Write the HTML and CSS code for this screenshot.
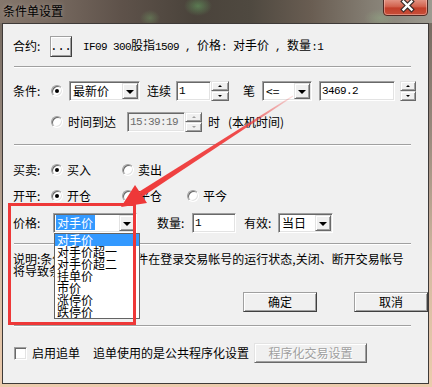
FILE: index.html
```html
<!DOCTYPE html>
<html>
<head>
<meta charset="utf-8">
<title>条件单设置</title>
<link rel="stylesheet" href="styles.css">
</head>
<body>
<div class="window">
  <div class="titlebar">
    <span class="title">条件单设置</span>
    <div class="close">
      <svg width="45" height="16" viewBox="0 0 45 16">
        <defs>
          <linearGradient id="cg" x1="0" y1="0" x2="0" y2="1">
            <stop offset="0" stop-color="#e49a8a"/>
            <stop offset="0.45" stop-color="#d2634f"/>
            <stop offset="0.55" stop-color="#c23f2a"/>
            <stop offset="1" stop-color="#c8503a"/>
          </linearGradient>
        </defs>
        <path d="M0.5,-1 V12 Q0.5,15.5 4,15.5 H41 Q44.5,15.5 44.5,12 V-1 Z" fill="url(#cg)" stroke="#4e2a24"/>
        <path d="M1.5,0 V12 Q1.5,14.5 4,14.5 H41 Q43.5,14.5 43.5,12 V0" fill="none" stroke="rgba(255,210,200,0.45)"/>
        <path d="M20.5,1.5 L28.5,9.5 M28.5,1.5 L20.5,9.5" stroke="#3a2a28" stroke-width="4.6" stroke-linecap="square"/>
        <path d="M20.5,1.5 L28.5,9.5 M28.5,1.5 L20.5,9.5" stroke="#ffffff" stroke-width="2.4" stroke-linecap="square"/>
      </svg>
    </div>
  </div>
  <div class="frame">
    <div class="client">
      <div class="row r1">
        <span class="t w37">合约:</span>
        <span class="pbtn dots">...</span>
        <span class="t info"><span class="m">IF09 300</span>股指<span class="m">1509 , </span>价格<span class="m">: </span>对手价<span class="m"> , </span>数量<span class="m">:1</span></span>
      </div>
      <div class="sep s1"></div>

      <div class="row r2">
        <span class="t w38">条件:</span>
        <span class="radio on"></span>
        <div class="combo c-new"><span class="val">最新价</span><span class="drop"><i class="tri"></i></span></div>
        <span class="t lx">连续</span>
        <div class="edit e-cnt">1</div>
        <div class="spin sp18"><span class="sb"><i class="up"></i></span><span class="sb"><i class="dn"></i></span></div>
        <span class="t bi">笔</span>
        <div class="combo c-op"><span class="val">&lt;=</span><span class="drop"><i class="tri"></i></span></div>
        <div class="edit e-px">3469.2</div>
        <div class="spin sp16"><span class="sb"><i class="up"></i></span><span class="sb"><i class="dn"></i></span></div>
      </div>

      <div class="row r3">
        <span class="w38"></span>
        <span class="radio"></span>
        <span class="t ml5">时间到达</span>
        <div class="edit dis e-time">15:39:19</div>
        <div class="spin sp17 dis"><span class="sb"><i class="up"></i></span><span class="sb"><i class="dn"></i></span></div>
        <span class="t shi">时</span>
        <span class="t local">(本机时间)</span>
      </div>
      <div class="sep s2"></div>

      <div class="row opts r-buy">
        <span class="t">买卖:</span>
        <span class="opt"><span class="radio on"></span><span class="t">买入</span></span>
        <span class="opt"><span class="radio"></span><span class="t">卖出</span></span>
        <span></span>
      </div>
      <div class="row opts r-open">
        <span class="t">开平:</span>
        <span class="opt"><span class="radio on"></span><span class="t">开仓</span></span>
        <span class="opt"><span class="radio"></span><span class="t">平仓</span></span>
        <span class="opt"><span class="radio"></span><span class="t">平今</span></span>
      </div>

      <div class="row r-price">
        <span class="t w40">价格:</span>
        <div class="combo c-price">
          <span class="val"><span class="hl">对手价</span></span>
          <span class="drop"><i class="tri"></i></span>
          <ul class="list">
            <li class="sel">对手价</li>
            <li>对手价超一</li>
            <li>对手价超二</li>
            <li>挂单价</li>
            <li>市价</li>
            <li>涨停价</li>
            <li>跌停价</li>
          </ul>
        </div>
        <span class="t qty">数量:</span>
        <div class="edit e-qty">1</div>
        <span class="t valid">有效:</span>
        <div class="combo c-day"><span class="val">当日</span><span class="drop"><i class="tri"></i></span></div>
      </div>
      <div class="sep s3"></div>

      <p class="note">说明:条件单需要运行软件在登录交易帐号的运行状态,关闭、断开交易帐号<br>将导致条件单失效。</p>

      <div class="row r-btns">
        <span class="pbtn ok">确定</span>
        <span class="pbtn cancel">取消</span>
      </div>
      <div class="sep s4"></div>

      <div class="row r-chk">
        <span class="check"></span>
        <span class="t ml5">启用追单</span>
        <span class="t desc">追单使用的是公共程序化设置</span>
        <span class="pbtn prog">程序化交易设置</span>
      </div>
    </div>
  </div>

  <svg class="annot" width="432" height="387" viewBox="0 0 432 387">
    <defs>
      <linearGradient id="ag" gradientUnits="userSpaceOnUse" x1="293" y1="96" x2="141" y2="194">
        <stop offset="0" stop-color="#ef3a3a" stop-opacity="0.15"/>
        <stop offset="0.35" stop-color="#ef3a3a" stop-opacity="0.9"/>
        <stop offset="1" stop-color="#ef3a3a" stop-opacity="1"/>
      </linearGradient>
    </defs>
    <rect x="9.5" y="204.5" width="125" height="119" fill="none" stroke="#ee3838" stroke-width="3"/>
    <polygon points="293.3,96.5 292.7,95.5 139.4,191.5 142.6,196.5" fill="url(#ag)"/>
    <polygon points="121,207 135,185 147,203" fill="#ee3838"/>
  </svg>
</div>
</body>
</html>
```

FILE: styles.css
```css
* { box-sizing: border-box; }
html, body { margin: 0; padding: 0; }
body {
  width: 432px;
  height: 387px;
  overflow: hidden;
  font-family: "Noto Sans CJK SC", "Noto Sans", sans-serif;
  font-size: 12px;
  color: #000;
}
.window {
  position: relative;
  width: 432px;
  height: 387px;
  display: flex;
  flex-direction: column;
  background: linear-gradient(180deg, #6f655c 0%, #9a8a7e 35%, #d6bba2 70%, #eccbad 100%);
}
.titlebar {
  height: 23px;
  flex: none;
  display: flex;
  justify-content: space-between;
  align-items: flex-start;
  background:
    radial-gradient(ellipse 14px 10px at 198px 6px, rgba(110,190,110,0.45), transparent),
    radial-gradient(ellipse 10px 8px at 150px 18px, rgba(120,180,110,0.35), transparent),
    radial-gradient(ellipse 16px 9px at 380px 18px, rgba(150,190,140,0.35), transparent),
    linear-gradient(90deg, #85776c 0%, #7a6c62 10%, #5e524a 28%, #4a433b 45%, #4f4940 58%, #695d52 72%, #857f74 86%, #9c9a90 100%);
}
.title {
  margin: 4px 0 0 3px;
  line-height: 14px;
  font-size: 12px;
  color: #000;
  text-shadow: 0 0 5px rgba(255,255,255,0.35);
}
.close {
  width: 45px;
  height: 16px;
  margin-right: 4px;
}
.close svg { display: block; }

.frame {
  flex: 1;
  display: flex;
  padding: 0 3px 3px 2px;
}
.client {
  flex: 1;
  background: #f0f0f0;
  border: 1px solid #3e3a38;
  padding-left: 10px;
}

.row {
  display: flex;
  align-items: center;
  height: 20px;
}
.t {
  white-space: nowrap;
  line-height: 20px;
}
.m {
  font-family: "Liberation Mono", monospace;
  font-size: 11px;
  letter-spacing: -0.6px;
  white-space: pre;
}
.w37 { width: 37px; flex: none; }
.w38 { width: 38px; flex: none; }
.w40 { width: 40px; flex: none; }
.ml5 { margin-left: 5px; }

/* separators */
.sep {
  height: 2px;
  width: 397px;
  margin-left: 1px;
  border-top: 1px solid #a0a0a0;
  border-bottom: 1px solid #ffffff;
}

/* vertical rhythm */
.r1 { margin-top: 12px; }
.s1 { margin-top: 10px; }
.r2 { margin-top: 13px; }
.r3 { margin-top: 11px; }
.s2 { margin-top: 12px; }
.r-buy { margin-top: 14px; }
.r-open { margin-top: 6px; }
.r-price { margin-top: 7px; }
.s3 { margin-top: 10px; }
.note { margin: 8px 0 0 0; line-height: 12px; white-space: nowrap; }
.r-btns { margin-top: 15px; padding-left: 230px; }
.s4 { margin-top: 13px; }
.r-chk { margin-top: 16px; }

/* 3D controls */
.pbtn {
  display: flex;
  align-items: center;
  justify-content: center;
  height: 20px;
  background: #f0f0f0;
  border: 1px solid;
  border-color: #a0a0a0 #404040 #404040 #a0a0a0;
  box-shadow: inset 1px 1px 0 #ffffff, inset -1px -1px 0 #a0a0a0;
  white-space: nowrap;
  line-height: 16px;
}
.dots { width: 22px; height: 21px; margin-top: 1px; font-family: "Liberation Mono", monospace; }
.info { margin-left: 11px; }
.ok { width: 74px; }
.cancel { width: 74px; margin-left: 37px; }
.prog {
  width: 113px;
  margin-left: 5px;
  color: #a0a0a0;
  text-shadow: 1px 1px 0 #ffffff;
  border-color: #e3e3e3 #696969 #696969 #e3e3e3;
}

.radio {
  flex: none;
  position: relative;
  width: 12px;
  height: 12px;
  border-radius: 50%;
  background: #fff;
  border: 1px solid;
  border-color: #a0a0a0 #ffffff #ffffff #a0a0a0;
  box-shadow: inset 1px 1px 0 #696969, inset -1px -1px 0 #e3e3e3;
}
.radio.on::after {
  content: "";
  position: absolute;
  left: 3px;
  top: 3px;
  width: 4px;
  height: 4px;
  border-radius: 50%;
  background: #000;
}
.check {
  flex: none;
  width: 13px;
  height: 13px;
  margin-left: 1px;
  background: #fff;
  border: 1px solid;
  border-color: #a0a0a0 #ffffff #ffffff #a0a0a0;
  box-shadow: inset 1px 1px 0 #696969, inset -1px -1px 0 #e3e3e3;
}

.edit, .combo {
  flex: none;
  height: 20px;
  background: #fff;
  border: 1px solid;
  border-color: #a0a0a0 #ffffff #ffffff #a0a0a0;
  box-shadow: inset 1px 1px 0 #696969, inset -1px -1px 0 #e3e3e3;
  line-height: 18px;
  white-space: nowrap;
}
.edit {
  padding: 0 2px;
  font-family: "Liberation Mono", monospace;
  font-size: 11px;
  letter-spacing: -0.6px;
}
.edit.dis {
  background: #f0f0f0;
  color: #6d6d6d;
}
.combo {
  position: relative;
  display: flex;
  align-items: center;
  padding: 1px;
}
.combo .val {
  flex: 1;
  padding-left: 2px;
  line-height: 16px;
}
.drop {
  flex: none;
  width: 16px;
  height: 16px;
  display: flex;
  align-items: center;
  justify-content: center;
  background: #f0f0f0;
  border: 1px solid;
  border-color: #e3e3e3 #696969 #696969 #e3e3e3;
  box-shadow: inset 1px 1px 0 #ffffff, inset -1px -1px 0 #a0a0a0;
}
.tri {
  width: 0;
  height: 0;
  border-left: 4px solid transparent;
  border-right: 4px solid transparent;
  border-top: 4px solid #000;
  margin-top: 1px;
}

.spin {
  flex: none;
  height: 20px;
  display: flex;
  flex-direction: column;
}
.sp18 { width: 18px; }
.sp17 { width: 17px; }
.sp16 { width: 16px; margin-left: 5px; }
.sb {
  flex: 1;
  display: flex;
  align-items: center;
  justify-content: center;
  background: #f0f0f0;
  border: 1px solid;
  border-color: #e3e3e3 #696969 #696969 #e3e3e3;
  box-shadow: inset 1px 1px 0 #ffffff, inset -1px -1px 0 #a0a0a0;
}
.up {
  width: 0; height: 0;
  border-left: 2px solid transparent;
  border-right: 2px solid transparent;
  border-bottom: 2px solid #000;
}
.dn {
  width: 0; height: 0;
  border-left: 2px solid transparent;
  border-right: 2px solid transparent;
  border-top: 2px solid #000;
}
.spin.dis .up { border-bottom-color: #a0a0a0; }
.spin.dis .dn { border-top-color: #a0a0a0; }

/* row 2 */
.c-new { width: 71px; margin-left: 6px; }
.lx { width: 29px; margin-left: 7px; }
.e-cnt { width: 35px; }
.bi { width: 19px; margin-left: 14px; }
.c-op { width: 50px; }
.e-px { width: 76px; margin-left: 7px; }

/* row 3 */
.e-time { width: 58px; margin-left: 11px; }
.shi { margin-left: 6px; }
.local { margin-left: 8px; }

/* radio rows */
.opts {
  display: grid;
  grid-template-columns: 38px 71px 65px auto;
  align-items: center;
}
.opt {
  display: flex;
  align-items: center;
}
.opt .t { margin-left: 4px; }

/* price row */
.c-price { width: 84px; }
.hl {
  display: inline-block;
  background: #3399ff;
  color: #fff;
  line-height: 15px;
  padding: 0 2px 0 1px;
}
.c-price .val { padding-left: 1px; }
.qty { width: 35px; margin-left: 20px; }
.e-qty { width: 44px; }
.valid { width: 34px; margin-left: 8px; }
.c-day { width: 55px; }

.list {
  position: absolute;
  left: 0;
  top: 19px;
  width: 86px;
  margin: 0;
  padding: 0;
  list-style: none;
  background: #fff;
  border: 1px solid #646464;
  z-index: 5;
}
.list li {
  height: 12px;
  line-height: 12px;
  padding-left: 2px;
  white-space: nowrap;
}
.list li.sel {
  background: #3399ff;
  color: #fff;
}

/* check row */
.desc { margin-left: 13px; }

.annot {
  position: absolute;
  left: 0;
  top: 0;
  pointer-events: none;
  z-index: 10;
}
```
